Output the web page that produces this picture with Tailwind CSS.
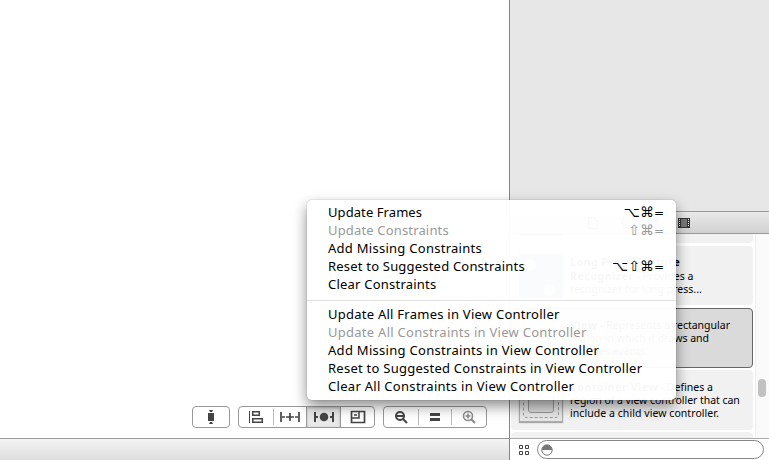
<!DOCTYPE html>
<html lang="en">
<head>
<meta charset="utf-8">
<title>Interface Builder</title>
<script src="https://cdn.jsdelivr.net/npm/@tailwindcss/browser@4"></script>
</head>
<body class="relative flex h-[460px] w-[769px] overflow-hidden bg-white font-['Noto_Sans','DejaVu_Sans',sans-serif] text-black">

<!-- Canvas -->
<main class="flex w-[509px] flex-col">
  <div class="flex h-[438px] items-end pb-[10px] pl-[192px]">
    <div class="flex h-[22px] w-[38px] items-center justify-center rounded-[4px] border border-[#999] bg-white">
      <svg width="10" height="16" viewBox="0 0 10 16" fill="#444"><path d="M3 1h4L6 3H4zM2 4h6v8H2zM4 13h2l1 2H3z"/></svg>
    </div>
    <div class="ml-[8px] flex h-[22px] w-[137px] overflow-hidden rounded-[4px] border border-[#999] bg-white">
      <div class="flex w-[34px] items-center justify-center">
        <svg width="16" height="14" viewBox="0 0 16 14" fill="none" stroke="#444"><path d="M1.500 1v12"/><path stroke-width="1.500" d="M4.750 1.750h6.500v3.500h-6.500zM4.750 8.750h9.500v3.500h-9.500z"/></svg>
      </div>
      <div class="my-[2px] w-px bg-[#bbb]"></div>
      <div class="flex w-[32px] items-center justify-center">
        <svg width="22" height="12" viewBox="0 0 22 12" fill="none" stroke="#444" stroke-width="1.700"><path d="M2 1v10M20 1v10M3 6h3M16 6h3M7 6h8M11 2v8"/></svg>
      </div>
      <div class="flex w-[35px] items-center justify-center border-x border-[#999] bg-[#e8e8e8] shadow-[inset_0_1px_3px_rgba(0,0,0,0.2)]">
        <svg width="22" height="12" viewBox="0 0 22 12" fill="#444"><path d="M1 1h2v4h2v2H3v4H1zM19 1h2v10h-2V7h-2V5h2z"/><circle cx="11" cy="6" r="4.3"/></svg>
      </div>
      <div class="flex flex-1 items-center justify-center">
        <svg width="16" height="14" viewBox="0 0 16 14" fill="none" stroke="#444"><path stroke-width="1.700" d="M1.500 1.500h13v11h-13z"/><path stroke-width="1.500" d="M2 8h7V2M4 5h3"/></svg>
      </div>
    </div>
    <div class="ml-[8px] flex h-[22px] w-[104px] rounded-[4px] border border-[#999] bg-white">
      <div class="flex w-[34px] items-center justify-center">
        <svg width="14" height="14" viewBox="0 0 14 14" fill="none" stroke="#444"><circle cx="6" cy="6" r="4" stroke-width="2"/><path stroke-width="2" d="M3 6h6M9 9l4 4"/></svg>
      </div>
      <div class="my-[2px] w-px bg-[#bbb]"></div>
      <div class="flex w-[32px] items-center justify-center">
        <svg width="10" height="8" viewBox="0 0 10 8" fill="#444"><path d="M0 0h10v3H0zM0 5h10v3H0z"/></svg>
      </div>
      <div class="my-[2px] w-px bg-[#bbb]"></div>
      <div class="flex flex-1 items-center justify-center">
        <svg width="14" height="14" viewBox="0 0 14 14" fill="none" stroke="#8c8c8c"><circle cx="6" cy="6" r="4.500" stroke-width="1.600"/><path stroke-width="1.600" d="M3.500 6h5M6 3.500v5"/><path stroke-width="2.200" d="M9 9l4 4"/></svg>
      </div>
    </div>
  </div>
  <div class="flex-1 border-t border-[#999] bg-gradient-to-b from-[#f4f4f4] to-[#dedede]"></div>
</main>

<!-- Utilities -->
<aside class="flex w-[260px] flex-col border-l border-[#858585] bg-white">
  <div class="h-[211px] bg-[#e7e7e7]"></div>
  <div class="flex h-[23px] items-center border-y border-[#999] bg-gradient-to-b from-[#e9e9e9] to-[#d1d1d1] pl-[76px]">
    <svg width="14" height="14" viewBox="0 0 14 14" fill="none" stroke="#555"><path d="M2.500 1.500h6l3 3v8h-9zM8.500 1.500v3h3"/></svg>
    <span class="ml-[19px] w-[20px] font-['DejaVu_Sans'] text-[12px] text-[#555]">{ }</span>
    <span class="ml-[9px] size-[11px] rounded-[2px] bg-[#3c87d0]"></span>
    <svg class="ml-[19px]" width="12" height="10" viewBox="0 0 12 10"><path fill="#333" d="M0 0h12v10H0z"/><path fill="#777" d="M3 1h6v8H3z"/><path stroke="#eee" stroke-dasharray="1 1" d="M1.500 1v8M10.500 1v8"/></svg>
  </div>
  <div class="flex h-[204px] overflow-hidden">
    <div class="w-[245px] pl-px text-[10.500px] leading-[13px] whitespace-nowrap">
      <div class="mb-[3px] flex h-[9px] w-[242px] rounded-b-[4px] bg-[#f1f1f1] pl-[8px]"><div class="h-[2px] w-[44px] bg-[#888]"></div></div>
      <div class="flex h-[59px] w-[242px] rounded-[4px] bg-[#f1f1f1] pt-[8px] pl-[8px]">
        <div class="relative size-[44px] bg-[#71849b]"><div class="absolute top-[5px] left-[5px] size-3 rounded-full bg-white/60"></div><div class="absolute right-[8px] bottom-[2px] size-3 rounded-full bg-white/60"></div></div>
        <div class="pt-[2px] pl-[7px] leading-[13.500px]"><div class="tracking-[0.550px]"><b>Long Press Gesture</b></div><div><b class="tracking-[0.600px]">Recognizer</b> - Provides a</div><div>recognizer for long press...</div></div>
      </div>
      <div class="mt-[3px] flex h-[60px] w-[242px] rounded-[4px] border border-[#666] bg-[#dadada] pt-[8px] pl-[7px]">
        <div class="size-[44px] border border-[#999] bg-[#e4e4e4]"></div>
        <div class="pt-[2px] pl-[7px]"><div><b class="tracking-[0.600px]">View</b> - Represents a rectangular</div><div>region in which it draws and</div><div>receives events.</div></div>
      </div>
      <div class="mt-[2px] flex h-[60px] w-[242px] rounded-[4px] bg-[#f1f1f1] pt-[8px] pl-[8px]">
        <div class="size-[44px] border border-[#aaa] bg-[#e6e6e6] p-[3px] shadow-[0_1px_1px_rgba(0,0,0,0.3)]">
          <div class="size-full rounded-[4px] border border-dashed border-[#999] p-[4px]"><div class="size-full rounded-[3px] border border-[#999] bg-[#dadada]"></div></div>
        </div>
        <div class="pt-[3px] pl-[7px]"><div><b class="tracking-[0.600px]">Container View</b> - Defines a</div><div class="tracking-[-0.050px]">region of a view controller that can</div><div class="tracking-[0.060px]">include a child view controller.</div></div>
      </div>
      <div class="mt-[2px] h-[20px] w-[242px] rounded-t-[4px] bg-[#f1f1f1]"></div>
    </div>
    <div class="flex-1 border-l border-[#eee] bg-[#fafafa] pt-[145px] pl-[2px]"><div class="h-[18px] w-[8px] rounded-full bg-[#c1c1c1]"></div></div>
  </div>
  <div class="flex flex-1 items-center border-t border-[#aaa] pl-[9px]">
    <svg width="10" height="10" viewBox="0 0 10 10" fill="none" stroke="#444"><path d="M.5.5h3v3h-3zM6.500.5h3v3h-3zM.5 6.500h3v3h-3zM6.500 6.500h3v3h-3z"/></svg>
    <div class="ml-[8px] flex h-[19px] w-[227px] items-center rounded-full border border-[#888] bg-white pl-[3px]">
      <svg width="12" height="12" viewBox="0 0 12 12"><circle cx="6" cy="6" r="5.200" fill="#fff" stroke="#777"/><path fill="#777" d="M1 6a5 5 0 0 1 10 0z"/></svg>
    </div>
  </div>
</aside>

<!-- Pop-up menu -->
<div class="absolute top-[200px] left-[307px] h-[200px] w-[369px] rounded-[5px] bg-white/97 pt-[3px] text-[13px] leading-[18px] whitespace-nowrap shadow-[0_0_1px_rgba(0,0,0,0.5),0_6px_14px_rgba(0,0,0,0.45)]">
  <div class="flex h-[18px] justify-between pr-[12px] pl-[21px]"><span class="tracking-[0.080px]">Update Frames</span><span class="font-['DejaVu_Sans'] text-[14px]">⌥⌘<span class="text-[12px]">=</span></span></div>
  <div class="flex h-[18px] justify-between pr-[12px] pl-[21px] text-[#999]"><span class="tracking-[0.160px]">Update Constraints</span><span class="font-['DejaVu_Sans'] text-[14px]">⇧⌘<span class="text-[12px]">=</span></span></div>
  <div class="pl-[21px]"><span class="tracking-[0.270px]">Add Missing Constraints</span></div>
  <div class="flex h-[18px] justify-between pr-[12px] pl-[21px]"><span class="tracking-[0.200px]">Reset to Suggested Constraints</span><span class="font-['DejaVu_Sans'] text-[14px]">⌥⇧⌘<span class="text-[12px]">=</span></span></div>
  <div class="pl-[21px]"><span class="tracking-[0.220px]">Clear Constraints</span></div>
  <div class="mt-[7px] mb-[4px] h-px bg-[#e2e2e2]"></div>
  <div class="pl-[21px]"><span class="tracking-[0.250px]">Update All Frames in View Controller</span></div>
  <div class="pl-[21px] text-[#999]"><span class="tracking-[0.270px]">Update All Constraints in View Controller</span></div>
  <div class="pl-[21px]"><span class="tracking-[0.290px]">Add Missing Constraints in View Controller</span></div>
  <div class="pl-[21px]"><span class="tracking-[0.250px]">Reset to Suggested Constraints in View Controller</span></div>
  <div class="pl-[21px]"><span class="tracking-[0.300px]">Clear All Constraints in View Controller</span></div>
</div>
</body>
</html>
